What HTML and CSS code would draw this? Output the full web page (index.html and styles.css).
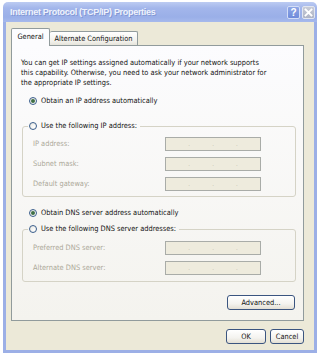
FILE: index.html
```html
<!DOCTYPE html>
<html>
<head>
<meta charset="utf-8">
<link rel="stylesheet" href="styles.css">
</head>
<body>
<div class="window">
  <div class="titlebar">
    <span class="title">Internet Protocol (TCP/IP) Properties</span>
    <div class="tb-buttons">
      <span class="tb-btn help">?</span>
      <span class="tb-btn close"><svg width="9" height="9" viewBox="0 0 9 9"><path d="M1.5 1.5 L7.5 7.5 M7.5 1.5 L1.5 7.5" stroke="#fff" stroke-width="1.8" stroke-linecap="square"/></svg></span>
    </div>
  </div>
  <div class="frame">
    <div class="tabs">
      <div class="tab active">General</div>
      <div class="tab">Alternate Configuration</div>
    </div>
    <div class="panel">
      <p class="intro">You can get IP settings assigned automatically if your network supports<br>this capability. Otherwise, you need to ask your network administrator for<br>the appropriate IP settings.</p>
      <div class="radio-row first"><span class="radio checked"></span><span>Obtain an IP address automatically</span></div>
      <fieldset class="group ip-group">
        <legend><span class="radio"></span><span>Use the following IP address:</span></legend>
        <div class="fields">
          <span class="lbl">IP address:</span>
          <div class="ipbox"><span>.</span><span>.</span><span>.</span></div>
          <span class="lbl">Subnet mask:</span>
          <div class="ipbox"><span>.</span><span>.</span><span>.</span></div>
          <span class="lbl">Default gateway:</span>
          <div class="ipbox"><span>.</span><span>.</span><span>.</span></div>
        </div>
      </fieldset>
      <div class="radio-row second"><span class="radio checked"></span><span>Obtain DNS server address automatically</span></div>
      <fieldset class="group dns-group">
        <legend><span class="radio"></span><span>Use the following DNS server addresses:</span></legend>
        <div class="fields">
          <span class="lbl">Preferred DNS server:</span>
          <div class="ipbox"><span>.</span><span>.</span><span>.</span></div>
          <span class="lbl">Alternate DNS server:</span>
          <div class="ipbox"><span>.</span><span>.</span><span>.</span></div>
        </div>
      </fieldset>
      <div class="adv-row"><button class="btn adv">Advanced...</button></div>
    </div>
    <div class="footer">
      <button class="btn ok">OK</button>
      <button class="btn cancel">Cancel</button>
    </div>
  </div>
</div>
</body>
</html>
```
FILE: styles.css
```css
html, body {
  margin: 0;
  padding: 0;
  background: #ffffff;
}
body {
  width: 317px;
  height: 358px;
  overflow: hidden;
  font-family: "DejaVu Sans Condensed", "DejaVu Sans", sans-serif;
  font-stretch: semi-condensed;
  font-size: 7.4px;
  line-height: 10px;
  color: #111;
}
.window {
  margin: 2px 0 0 3px;
  width: 314px;
}
.titlebar {
  height: 20px;
  box-sizing: border-box;
  display: flex;
  align-items: center;
  justify-content: space-between;
  padding: 0 2px 0 7px;
  background: linear-gradient(#BCCBF2, #A3B6EB 30%, #9AAFE8 75%, #A6B9EC);
  border-radius: 5px 5px 0 0;
}
.title {
  font-family: "Liberation Sans", sans-serif;
  font-weight: bold;
  font-size: 9px;
  color: #EEF2FC;
  text-shadow: 1px 1px 0 rgba(80, 100, 170, 0.35);
  letter-spacing: -0.3px;
}
.tb-buttons {
  display: flex;
  gap: 2px;
}
.tb-btn {
  width: 13px;
  height: 13px;
  box-sizing: border-box;
  border-radius: 2px;
  display: flex;
  align-items: center;
  justify-content: center;
}
.help {
  background: linear-gradient(#8EA6E6, #6F8BDA);
  border: 1px solid #D3DDF6;
  color: #ffffff;
  font-family: "Liberation Sans", sans-serif;
  font-weight: bold;
  font-size: 10px;
  line-height: 11px;
}
.close {
  background: linear-gradient(#C8CCD8, #AEB4C6);
  border: 1px solid #E2E6F0;
}
.frame {
  height: 331px;
  box-sizing: border-box;
  border: 3px solid #9CAFE6;
  border-top: 0;
  background: #ECE9D8;
  padding: 6px 10px 0 5px;
  display: flex;
  flex-direction: column;
}
.tabs {
  display: flex;
  align-items: flex-end;
  height: 18px;
  margin-bottom: -1px;
  position: relative;
  z-index: 1;
}
.tab {
  box-sizing: border-box;
  border: 1px solid #919B9C;
  border-bottom: 0;
  border-radius: 2px 2px 0 0;
  display: flex;
  align-items: center;
  justify-content: center;
}
.tab.active {
  width: 39px;
  height: 18px;
  background: #FCFCFE;
  padding-bottom: 2px;
}
.tab:not(.active) {
  width: 88px;
  height: 14px;
  margin-bottom: 1px;
  border-left: 0;
  background: linear-gradient(#FFFFFF, #F2F1EC 70%, #E6E4DB);
}
.panel {
  height: 276px;
  box-sizing: border-box;
  border: 1px solid #919B9C;
  background: linear-gradient(#FCFCFE, #F4F3EE);
  padding: 12px 7px 0 10px;
}
.intro {
  margin: 0 0 0 -1px;
}
.radio-row {
  display: flex;
  align-items: center;
  gap: 4px;
  height: 10px;
  margin-left: 7px;
}
.radio-row.first {
  margin-top: 8px;
}
.radio-row.second {
  margin-top: 11px;
}
.radio {
  width: 8px;
  height: 8px;
  box-sizing: border-box;
  border: 1px solid #3A5E8C;
  border-radius: 50%;
  background: radial-gradient(circle at 70% 70%, #FFFFFF, #E6E5DE);
  display: flex;
  align-items: center;
  justify-content: center;
  flex: none;
}
.radio.checked::after {
  content: "";
  width: 4px;
  height: 4px;
  border-radius: 50%;
  background: #3F6F45;
}
.group {
  margin: 0;
  padding: 6px 0 5px 10px;
  border: 1px solid #D5D3C6;
  border-radius: 3px;
  min-inline-size: 0;
}
.ip-group {
  margin-top: 15px;
}
.dns-group {
  margin-top: 6px;
  padding-top: 7px;
  padding-bottom: 6px;
}
.group legend {
  margin-left: -5px;
  padding: 0 3px 0 1px;
  height: 10px;
  display: flex;
  align-items: center;
  gap: 4px;
}
.fields {
  display: grid;
  grid-template-columns: 132px 96px;
  grid-auto-rows: 14px;
  row-gap: 6px;
  align-items: center;
}
.lbl {
  color: #ACA899;
}
.ipbox {
  height: 14px;
  box-sizing: border-box;
  border: 1px solid #A9ACA8;
  background: #EEEBDD;
  display: flex;
  justify-content: space-evenly;
  align-items: center;
  color: #B9B6A8;
  font-size: 6px;
  line-height: 6px;
}
.adv-row {
  display: flex;
  justify-content: flex-end;
  margin: 13px 1px 0 0;
}
.btn {
  height: 15px;
  box-sizing: border-box;
  border: 1px solid #3B5580;
  border-radius: 3px;
  background: linear-gradient(#FFFFFF, #F4F3EF 60%, #E3DFD4);
  font-family: inherit;
  font-stretch: inherit;
  font-size: 7.4px;
  color: #111;
  padding: 0;
}
.adv {
  width: 68px;
}
.footer {
  display: flex;
  justify-content: flex-end;
  gap: 4px;
  margin-top: 8px;
}
.ok {
  width: 40px;
}
.cancel {
  width: 34px;
}
```
